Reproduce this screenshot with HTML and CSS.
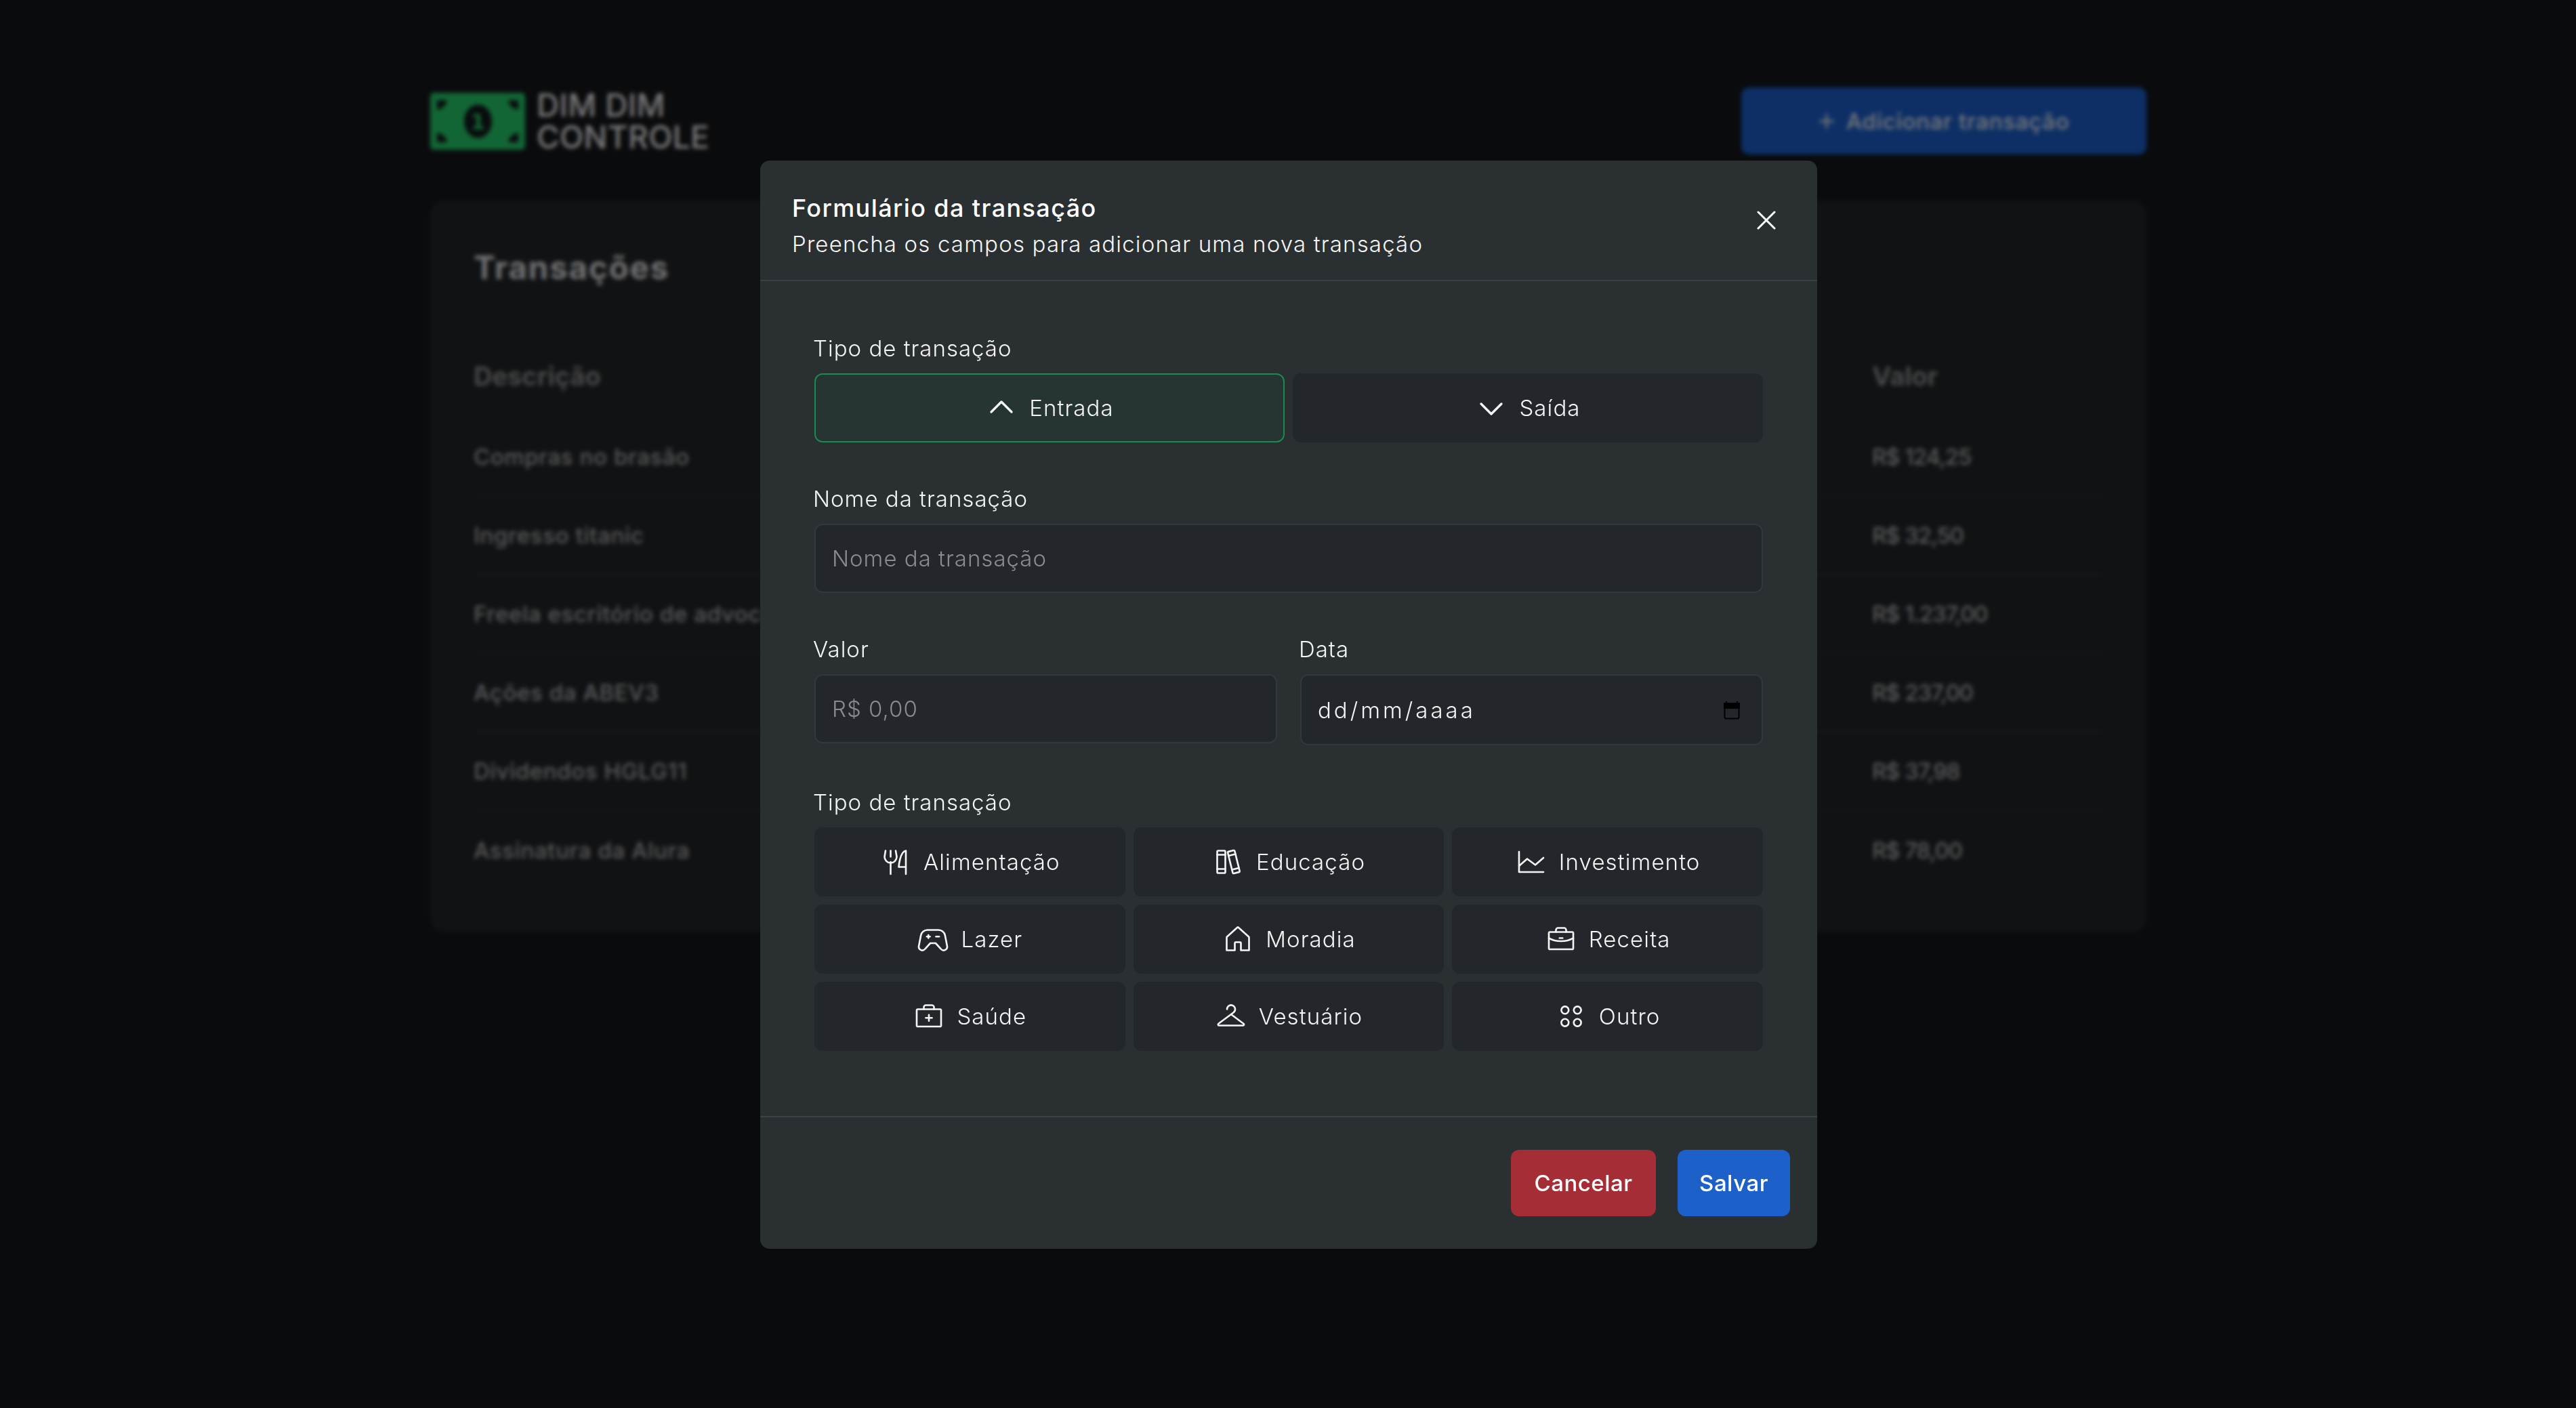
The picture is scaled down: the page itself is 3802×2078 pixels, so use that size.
FILE: index.html
```html
<!DOCTYPE html>
<html lang="pt-BR">
<head>
<meta charset="utf-8">
<title>Dim Dim Controle</title>
<link rel="stylesheet" href="styles.css">
</head>
<body>
<svg class="defs" aria-hidden="true">
  <defs>
    <symbol id="i-fork" viewBox="0 0 256 256"><line x1="88" y1="40" x2="88" y2="88"/><line x1="88" y1="128" x2="88" y2="224"/><path d="M208,168H152S160,48,208,40V224"/><path d="M48,40l-8,48a48,48,0,0,0,96,0l-8-48"/></symbol>
    <symbol id="i-books" viewBox="0 0 256 256"><rect x="40" y="40" width="64" height="176" rx="8"/><line x1="40" y1="72" x2="104" y2="72"/><line x1="40" y1="184" x2="104" y2="184"/><g transform="rotate(-14 170 128)"><rect x="142" y="40" width="56" height="176" rx="8"/><line x1="142" y1="72" x2="198" y2="72"/><line x1="142" y1="184" x2="198" y2="184"/></g></symbol>
    <symbol id="i-chart" viewBox="0 0 256 256"><polyline points="224 208 32 208 32 48"/><polyline points="224 96 160 152 96 104 32 160"/></symbol>
    <symbol id="i-game" viewBox="0 0 256 256"><line x1="152" y1="108" x2="176" y2="108"/><line x1="80" y1="108" x2="104" y2="108"/><line x1="92" y1="96" x2="92" y2="120"/><path d="M84,56H172a52,52,0,0,1,51.1,42.7l16.4,84.2a28,28,0,0,1-47.5,24.6L149,160H107L64,207.5a28,28,0,0,1-47.5-24.6L32.9,98.7A52,52,0,0,1,84,56Z"/></symbol>
    <symbol id="i-house" viewBox="0 0 256 256"><path d="M152,216V160a8,8,0,0,0-8-8H112a8,8,0,0,0-8,8v56H40V115.5a8.3,8.3,0,0,1,2.6-5.9l80-72.7a8,8,0,0,1,10.8,0l80,72.7a8.3,8.3,0,0,1,2.6,5.9V216Z"/></symbol>
    <symbol id="i-case" viewBox="0 0 256 256"><rect x="32" y="72" width="192" height="136" rx="8"/><path d="M168,72V56a16,16,0,0,0-16-16H104A16,16,0,0,0,88,56V72"/><path d="M224,120.3A191.5,191.5,0,0,1,128,144a191.5,191.5,0,0,1-96-23.7"/><line x1="116" y1="120" x2="140" y2="120"/></symbol>
    <symbol id="i-kit" viewBox="0 0 256 256"><rect x="32" y="72" width="192" height="136" rx="8"/><path d="M168,72V56a16,16,0,0,0-16-16H104A16,16,0,0,0,88,56V72"/><line x1="128" y1="116" x2="128" y2="164"/><line x1="104" y1="140" x2="152" y2="140"/></symbol>
    <symbol id="i-hanger" viewBox="0 0 256 256"><path d="M96,72a32,32,0,1,1,51.2,25.6L128,112l99.2,74.4A8,8,0,0,1,222.4,200H33.6a8,8,0,0,1-4.8-14.4L128,112"/></symbol>
    <symbol id="i-circles" viewBox="0 0 256 256"><circle cx="79" cy="79" r="29"/><circle cx="177" cy="79" r="29"/><circle cx="79" cy="177" r="29"/><circle cx="177" cy="177" r="29"/></symbol>
  </defs>
</svg>

<div class="page">
  <header class="top">
    <div class="logo">
      <svg class="logo-mark" viewBox="0 0 140 84" aria-hidden="true">
        <rect class="bill" width="140" height="84" rx="5"/>
        <path class="ink" d="M10 11H25C24 18 18 24 10 25Z M130 11H115C116 18 122 24 130 25Z M10 73H25C24 66 18 60 10 59Z M130 73H115C116 66 122 60 130 59Z"/>
        <ellipse class="ink" cx="70.500" cy="42" rx="20.500" ry="24.500"/>
        <text class="bill-one" x="70.500" y="54" text-anchor="middle">1</text>
      </svg>
      <div class="logo-text"><span class="logo-line">DIM DIM</span><span class="logo-line">CONTROLE</span></div>
    </div>
    <button class="add-btn" type="button">
      <svg class="add-plus" viewBox="0 0 24 24"><path d="M12 1V23M1 12H23"/></svg>
      <span>Adicionar transação</span>
    </button>
  </header>

  <section class="card">
    <h1 class="card-title">Transações</h1>
    <div class="table">
      <div class="row head"><span>Descrição</span><span>Valor</span></div>
      <div class="row"><span>Compras no brasão</span><span class="val">R$ 124,25</span></div>
      <div class="row"><span>Ingresso titanic</span><span class="val">R$ 32,50</span></div>
      <div class="row"><span>Freela escritório de advocacia</span><span class="val">R$ 1.237,00</span></div>
      <div class="row"><span>Ações da ABEV3</span><span class="val">R$ 237,00</span></div>
      <div class="row"><span>Dividendos HGLG11</span><span class="val">R$ 37,98</span></div>
      <div class="row"><span>Assinatura da Alura</span><span class="val">R$ 78,00</span></div>
    </div>
  </section>
</div>

<div class="overlay">
  <div class="modal">
    <div class="modal-head">
      <div>
        <h2 class="modal-title">Formulário da transação</h2>
        <p class="modal-sub">Preencha os campos para adicionar uma nova transação</p>
      </div>
      <svg class="close" viewBox="0 0 28 28"><path d="M2 2L26 26M26 2L2 26"/></svg>
    </div>

    <form class="modal-body">
      <div class="group">
        <label class="lbl">Tipo de transação</label>
        <div class="split">
          <button class="opt opt-on" type="button"><svg class="ic ic-bold" viewBox="0 0 256 256"><polyline points="48 160 128 80 208 160"/></svg><span>Entrada</span></button>
          <button class="opt" type="button"><svg class="ic ic-bold" viewBox="0 0 256 256"><polyline points="208 96 128 176 48 96"/></svg><span>Saída</span></button>
        </div>
      </div>
      <div class="group">
        <label class="lbl">Nome da transação</label>
        <input class="field" type="text" placeholder="Nome da transação">
      </div>
      <div class="group-row">
        <div class="group">
          <label class="lbl">Valor</label>
          <input class="field" type="text" placeholder="R$ 0,00">
        </div>
        <div class="group">
          <label class="lbl">Data</label>
          <div class="field field-date">
            <span class="date-text">dd/mm/aaaa</span>
            <svg class="cal" viewBox="0 0 26 28"><path d="M5 1V5M21 1V5"/><rect x="2.500" y="4.500" width="21" height="22" rx="2"/><rect class="cal-top" x="2" y="4" width="22" height="7"/></svg>
          </div>
        </div>
      </div>
      <div class="group group-cats">
        <label class="lbl">Tipo de transação</label>
        <div class="cats">
          <button class="opt" type="button"><svg class="ic"><use href="#i-fork"/></svg><span>Alimentação</span></button>
          <button class="opt" type="button"><svg class="ic"><use href="#i-books"/></svg><span>Educação</span></button>
          <button class="opt" type="button"><svg class="ic"><use href="#i-chart"/></svg><span>Investimento</span></button>
          <button class="opt" type="button"><svg class="ic"><use href="#i-game"/></svg><span>Lazer</span></button>
          <button class="opt" type="button"><svg class="ic"><use href="#i-house"/></svg><span>Moradia</span></button>
          <button class="opt" type="button"><svg class="ic"><use href="#i-case"/></svg><span>Receita</span></button>
          <button class="opt" type="button"><svg class="ic"><use href="#i-kit"/></svg><span>Saúde</span></button>
          <button class="opt" type="button"><svg class="ic"><use href="#i-hanger"/></svg><span>Vestuário</span></button>
          <button class="opt" type="button"><svg class="ic"><use href="#i-circles"/></svg><span>Outro</span></button>
        </div>
      </div>
    </form>

    <div class="modal-foot">
      <button class="act act-cancel" type="button">Cancelar</button>
      <button class="act act-save" type="button">Salvar</button>
    </div>
  </div>
</div>
</body>
</html>
```

FILE: styles.css
```css
* { box-sizing: border-box; }
html, body { margin: 0; height: 100%; }
body {
  background: #0a0b0d;
  color: #f5f5f5;
  font-family: "Inter", "Liberation Sans", sans-serif;
  font-size: 33px;
  letter-spacing: 1px;
  padding-left: 1px;
  overflow: hidden;
}
button, input { font: inherit; letter-spacing: inherit; color: inherit; }
.defs { width: 0; height: 0; position: absolute; }

/* Blurred page behind the dialog */
.page { width: 2533px; margin: 0 auto; padding-top: 129px; }
.top { display: flex; justify-content: space-between; align-items: center; height: 99px; margin-bottom: 68px; }
.logo { display: flex; align-items: center; gap: 17px; }
.logo-mark { width: 140px; height: 84px; display: block; }
.bill { fill: #126635; }
.ink { fill: #0a0b0d; }
.bill-one { fill: #126635; font: 700 32px "DejaVu Sans", sans-serif; letter-spacing: 0; }
.logo-text { font-size: 46px; line-height: 47px; font-weight: 500; color: #7b7b7b; letter-spacing: .3px; }
.logo-line { display: block; }
.add-btn { width: 598px; height: 99px; display: flex; align-items: center; justify-content: center; gap: 17px; background: #0d2f66; border: 0; border-radius: 12px; color: #7a7a7a; font-weight: 500; letter-spacing: .7px; }
.add-plus { width: 24px; height: 24px; fill: none; stroke: #7a7a7a; stroke-width: 3; }

.card { background: #101214; border-radius: 20px; padding: 63px 64px 62px; }
.card-title { margin: 0 0 62px; font-size: 48px; line-height: 72px; font-weight: 700; letter-spacing: 1.5px; color: #717171; }
.row { display: grid; grid-template-columns: 1fr 341px; align-items: center; height: 116px; border-bottom: 2px solid #17191b; color: #5a5a5a; font-weight: 500; white-space: nowrap; letter-spacing: .6px; }
.row:last-child { border-bottom: 0; }
.row.head { height: 124px; border-bottom: 0; font-size: 38px; font-weight: 700; color: #484848; letter-spacing: 0; }
.val { letter-spacing: -1.100px; }

/* Dialog */
.overlay { position: fixed; inset: 2px 0 0 2px; display: flex; align-items: center; justify-content: center; backdrop-filter: blur(3px); }
.modal { width: 1560px; height: 1606px; background: #2a2f32; border-radius: 14px; display: flex; flex-direction: column; }
.modal-head { height: 178px; padding: 44px 60px 0 47px; border-bottom: 2px solid #3d4145; display: flex; justify-content: space-between; }
.modal-title { margin: 0; font-size: 36px; line-height: 53px; font-weight: 500; letter-spacing: 1.4px; color: #fff; }
.modal-sub { margin: 0; line-height: 53px; font-weight: 300; letter-spacing: 1.17px; }
.close { width: 28px; height: 28px; margin-top: 30px; margin-right: 1px; fill: none; stroke: #fff; stroke-width: 3; stroke-linecap: round; }

.modal-body { flex: 1; padding: 79px 80px 0; display: flex; flex-direction: column; gap: 63px; }
.group { display: flex; flex-direction: column; gap: 17px; }
.lbl { line-height: 40px; font-weight: 300; display: block; margin-left: -2px; }
.split { display: grid; grid-template-columns: 1fr 1fr; gap: 12px; }
.group-row { display: grid; grid-template-columns: 1fr 1fr; gap: 34px; height: 162px; }
.group-cats { margin-top: 1px; }

.opt { height: 102px; display: flex; align-items: center; justify-content: center; gap: 17px; background: #23262a; border: 0; border-radius: 12px; font-weight: 300; letter-spacing: 1.1px; padding: 0; }
.opt-on { background: #263433; border: 2px solid #1b8a50; }
.ic { width: 48px; height: 48px; fill: none; stroke: #f5f5f5; stroke-width: 14; stroke-linecap: round; stroke-linejoin: round; flex: none; }
.ic-bold { stroke-width: 18; }

.field { width: 100%; height: 102px; background: #23262a; border: 2px solid #33383c; border-radius: 12px; padding: 0 24px; outline: 0; font-weight: 300; }
.field::placeholder { color: #8a8c8e; opacity: 1; }
.field-date { height: 105px; display: flex; align-items: center; justify-content: space-between; padding-right: 31px; }
.date-text { letter-spacing: 4px; }
.cal { width: 26px; height: 28px; fill: none; stroke: #000; stroke-width: 2; }
.cal-top { fill: #000; }

.cats { display: grid; grid-template-columns: repeat(3, 1fr); gap: 12px; }

.modal-foot { height: 196px; border-top: 2px solid #3d4145; padding: 48px 40px 0 0; display: flex; justify-content: flex-end; gap: 32px; }
.act { height: 98px; border: 0; border-radius: 12px; font-weight: 500; color: #fff; padding: 0; letter-spacing: .5px; }
.act-cancel { width: 214px; background: #a52d35; }
.act-save { width: 166px; background: #1d60c9; }
```
